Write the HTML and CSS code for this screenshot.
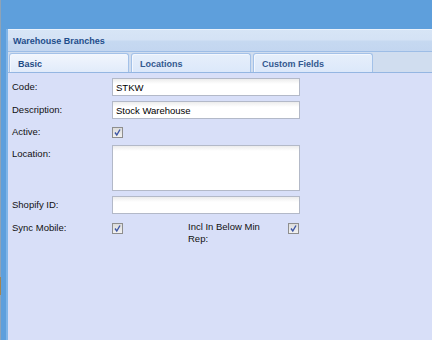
FILE: index.html
```
<!DOCTYPE html>
<html lang="en">
    <head>
        <meta charset="UTF-8">
        <title>Warehouse Branches</title>
        <link rel="stylesheet" href="styles.css">
    </head>

    <body>
        <div class="desktop">
            <div class="edge"></div>
            <div class="window">
                <div class="panel-title">Warehouse Branches</div>
                <div class="tabs">
                    <div class="tab active">Basic</div>
                    <div class="tab">Locations</div>
                    <div class="tab">Custom Fields</div>
                </div>
                <div class="form">
                    <div class="row">
                        <div class="lbl">Code:</div>
                        <input class="field" type="text" value="STKW">
                    </div>
                    <div class="row">
                        <div class="lbl">Description:</div>
                        <input class="field" type="text" value="Stock Warehouse">
                    </div>
                    <div class="row row-check">
                        <div class="lbl">Active:</div>
                        <span class="check"><svg width="9" height="9" viewBox="0 0 9 9"><path d="M2 4.5 L3.8 7 L7 1.5" fill="none" stroke="#3d56a6" stroke-width="1.4"/></svg></span>
                    </div>
                    <div class="row">
                        <div class="lbl">Location:</div>
                        <textarea class="field area"></textarea>
                    </div>
                    <div class="row">
                        <div class="lbl">Shopify ID:</div>
                        <input class="field" type="text" value="">
                    </div>
                    <div class="row row-sync">
                        <div class="lbl">Sync Mobile:</div>
                        <span class="check"><svg width="9" height="9" viewBox="0 0 9 9"><path d="M2 4.5 L3.8 7 L7 1.5" fill="none" stroke="#3d56a6" stroke-width="1.4"/></svg></span>
                        <div class="lbl lbl-wrap">Incl In Below Min Rep:</div>
                        <span class="check"><svg width="9" height="9" viewBox="0 0 9 9"><path d="M2 4.5 L3.8 7 L7 1.5" fill="none" stroke="#3d56a6" stroke-width="1.4"/></svg></span>
                    </div>
                </div>
            </div>
        </div>
    </body>
</html>
```

FILE: styles.css
```
body{
    margin: 0;
    background-color: #5e9fdc;
    font-family: "Liberation Sans", Arial, sans-serif;
    overflow: hidden;
}
.desktop{
    display: flex;
    height: 340px;
    width: 432px;
}
.edge{
    width: 1px;
    background: linear-gradient(to bottom, #8ea3b7 0, #8ea3b7 277px, #a7844c 277px, #a7844c 295px, #8ea3b7 295px);
}
.window{
    flex: 1;
    margin-left: 5px;
    margin-top: 29px;
    border-left: 2px solid #80b5e8;
    background-color: #d8dff8;
    display: flex;
    flex-direction: column;
}
.panel-title{
    height: 21px;
    line-height: 22px;
    border-top: 1px solid #eaf1fb;
    padding-left: 5px;
    background: linear-gradient(to bottom, #d7e5f6 0, #d4e2f5 10px, #c6d9f1 11px, #c3d6f0 21px);
    color: #1e4d8b;
    font-size: 9px;
    font-weight: bold;
}
.tabs{
    display: flex;
    gap: 2px;
    height: 19px;
    padding-left: 1px;
    padding-top: 1px;
    border-top: 1px solid #9dbde6;
    border-bottom: 1px solid #94b6e2;
    background-color: #d0ddef;
}
.tab{
    width: 110px;
    height: 18px;
    border: 1px solid #a3c1e8;
    border-bottom: none;
    border-radius: 3px 3px 0 0;
    box-shadow: inset 1px 1px 0 #f3f7fe;
    background: linear-gradient(to bottom, #e6effb, #dce8fa);
    color: #33588f;
    font-size: 9px;
    font-weight: bold;
    line-height: 20px;
    padding-left: 8px;
}
.tab.active{
    background: linear-gradient(to bottom, #f2f6fd, #e1ebfa);
    color: #1f4b86;
}
.form{
    padding: 5px 0 0 4px;
    display: flex;
    flex-direction: column;
    gap: 5px;
}
.row{
    display: flex;
    align-items: flex-start;
}
.lbl{
    width: 100px;
    flex-shrink: 0;
    font-size: 9.5px;
    line-height: 18px;
    color: #111;
}
.field{
    width: 188px;
    height: 18px;
    box-sizing: border-box;
    margin: 0;
    border: 1px solid #b3b9c8;
    border-radius: 0;
    padding: 0 3px;
    background: linear-gradient(to bottom, #ececec 0, #ffffff 5px);
    font-family: "Liberation Sans", Arial, sans-serif;
    font-size: 9.5px;
    color: #000;
    outline: none;
}
.area{
    height: 46px;
    resize: none;
    display: block;
}
.row-check{
    height: 16px;
}
.row-check .lbl{
    line-height: 16px;
}
.row-sync{
    height: 30px;
}
.check{
    width: 11px;
    height: 11px;
    box-sizing: border-box;
    margin-top: 3px;
    border: 1px solid #8e8e8e;
    background: linear-gradient(to bottom, #dcdcdc, #f2f2f2);
    display: flex;
    align-items: center;
    justify-content: center;
    flex-shrink: 0;
}
.row-sync .check{
    margin-top: 4px;
}
.row-sync .lbl-wrap{
    width: 90px;
    margin-left: 65px;
    margin-right: 10px;
    line-height: 12px;
    padding-top: 2px;
}
```
